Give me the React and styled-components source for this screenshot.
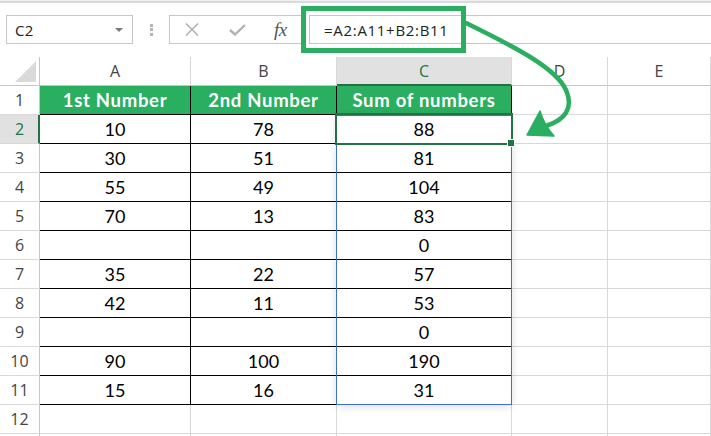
import React from 'react';
import styled, { createGlobalStyle, css } from 'styled-components';

const GREEN = '#2aae5f';
const DARK_GREEN = '#217346';
const GRID = '#d9d9d9';
const HEAD_LINE = '#c6c6c6';

const GlobalStyle = createGlobalStyle`
  html, body { margin: 0; padding: 0; background: #fff; }
  body { font-family: "Open Sans", "Noto Sans", sans-serif; }
  * { box-sizing: border-box; }
`;

const Window = styled.div`
  position: relative;
  width: 711px;
  height: 436px;
  overflow: hidden;
  background: #fff;
  display: flex;
  flex-direction: column;
`;

const RibbonEdge = styled.div`
  flex: none;
  height: 3px;
  border-top: 1px solid #f0f0f0;
  border-bottom: 2px solid #dadada;
`;

const FormulaBar = styled.div`
  flex: none;
  display: flex;
  align-items: center;
  height: 29px;
  margin-top: 12px;
  padding-left: 6px;
`;

const NameBox = styled.div`
  width: 127px;
  height: 29px;
  border: 1px solid ${HEAD_LINE};
  display: flex;
  align-items: center;
  justify-content: space-between;
  padding: 0 9px 0 8px;
  font-size: 15px;
  letter-spacing: 0.3px;
  color: #222;
`;

const Caret = styled.span`
  width: 0;
  height: 0;
  border-left: 4px solid transparent;
  border-right: 4px solid transparent;
  border-top: 4px solid #7a7a7a;
`;

const Grip = styled.div`
  margin-left: 17px;
  display: flex;
  flex-direction: column;
  gap: 1.5px;
`;

const GripDot = styled.span`
  width: 3px;
  height: 3px;
  background: #b4b4b4;
`;

const FxBox = styled.div`
  margin-left: 16px;
  width: 134px;
  height: 29px;
  border: 1px solid ${HEAD_LINE};
  border-right: none;
  display: flex;
  align-items: center;
  padding-left: 15px;
`;

const IconButton = styled.span`
  display: inline-flex;
  margin-left: ${p => p.$gap || 0}px;
`;

const FxLabel = styled.span`
  margin-left: 28px;
  font-family: "Liberation Serif", "DejaVu Serif", serif;
  font-style: italic;
  font-size: 19px;
  color: #555;
  letter-spacing: -0.5px;
  line-height: 1;
`;

const FormulaInput = styled.div`
  flex: 1;
  margin-left: 6px;
  height: 29px;
  border: 1px solid ${HEAD_LINE};
  border-right: none;
  display: flex;
  align-items: center;
  padding-left: 14px;
  font-size: 15px;
  letter-spacing: 0.7px;
  color: #222;
`;

const Callout = styled.div`
  position: absolute;
  left: 301px;
  top: 6px;
  width: 165px;
  height: 47px;
  border: 5px solid ${GREEN};
  pointer-events: none;
`;

const ArrowLayer = styled.svg`
  position: absolute;
  left: 0;
  top: 0;
  pointer-events: none;
`;

const Sheet = styled.div`
  flex: none;
  margin-top: 13px;
  display: grid;
  grid-template-columns: 40px 151px 146px 175px 96px 103px;
  grid-auto-rows: 29px;
`;

const placed = css`
  grid-column: ${p => p.$c};
  grid-row: ${p => p.$r};
`;

const Corner = styled.div`
  ${placed};
  position: relative;
  border-right: 1px solid ${HEAD_LINE};
  border-bottom: 1px solid ${HEAD_LINE};
  &::after {
    content: '';
    position: absolute;
    right: 3px;
    bottom: 3px;
    width: 0;
    height: 0;
    border-left: 21px solid transparent;
    border-bottom: 21px solid #dadada;
  }
`;

const ColHead = styled.div`
  ${placed};
  display: flex;
  align-items: center;
  justify-content: center;
  font-size: 16px;
  color: #444;
  border-right: 1px solid ${GRID};
  border-bottom: 1px solid ${HEAD_LINE};
  ${p => p.$selected && css`
    background: #e1e1e1;
    color: ${DARK_GREEN};
    border-bottom: 2px solid ${DARK_GREEN};
    padding-top: 1px;
  `}
`;

const RowHead = styled.div`
  ${placed};
  display: flex;
  align-items: center;
  justify-content: center;
  font-size: 16px;
  color: #444;
  border-right: 1px solid ${HEAD_LINE};
  border-bottom: 1px solid ${GRID};
  ${p => p.$selected && css`
    background: #e1e1e1;
    color: ${DARK_GREEN};
    border-right: 2px solid ${DARK_GREEN};
    padding-left: 1px;
  `}
`;

const Cell = styled.div`
  ${placed};
  display: flex;
  align-items: center;
  justify-content: center;
  font-family: Lato, "Open Sans", sans-serif;
  font-size: 18px;
  color: #000;
  border-right: 1px solid ${p => (p.$boxed ? '#000' : GRID)};
  border-bottom: 1px solid ${p => (p.$boxed ? '#000' : GRID)};
  ${p => p.$title && css`
    background: ${GREEN};
    color: #fff;
    font-weight: 700;
    font-size: 18.5px;
    letter-spacing: 0.7px;
  `}
`;

const SpillRange = styled.div`
  ${placed};
  margin-left: -1px;
  border: 1px solid #3a6fd6;
  box-shadow: 0 2px 9px rgba(0, 0, 0, 0.12);
  z-index: 1;
  pointer-events: none;
`;

const ActiveCell = styled.div`
  ${placed};
  position: relative;
  margin: -2px -1px -1px -2px;
  border: 2px solid ${DARK_GREEN};
  z-index: 2;
  pointer-events: none;
  &::after {
    content: '';
    position: absolute;
    right: -4px;
    bottom: -4px;
    width: 6px;
    height: 6px;
    background: ${DARK_GREEN};
    border: 1px solid #fff;
  }
`;

const COLS = ['A', 'B', 'C', 'D', 'E'];
const DATA = [
  ['1st Number', '2nd Number', 'Sum of numbers'],
  ['10', '78', '88'],
  ['30', '51', '81'],
  ['55', '49', '104'],
  ['70', '13', '83'],
  ['', '', '0'],
  ['35', '22', '57'],
  ['42', '11', '53'],
  ['', '', '0'],
  ['90', '100', '190'],
  ['15', '16', '31'],
];
const ROW_COUNT = 13;

const CrossIcon = () => (
  <svg width="14" height="13" viewBox="0 0 14 13">
    <path d="M1 0.5 L13 12.5 M13 0.5 L1 12.5" stroke="#b3b3b3" strokeWidth="1.6" fill="none" />
  </svg>
);

const CheckIcon = () => (
  <svg width="17" height="12" viewBox="0 0 17 12">
    <path d="M1 6 L6 10.5 L16 1" stroke="#b3b3b3" strokeWidth="2.4" fill="none" />
  </svg>
);

export default function App() {
  const rows = [];
  for (let r = 1; r <= ROW_COUNT; r++) {
    const gr = r + 1;
    rows.push(
      <RowHead key={`rh${r}`} $c={1} $r={gr} $selected={r === 2}>
        {r <= 12 ? r : ''}
      </RowHead>
    );
    for (let c = 0; c < 5; c++) {
      const value = DATA[r - 1] && c < 3 ? DATA[r - 1][c] : '';
      const boxed = r <= 11 && c < 3;
      rows.push(
        <Cell key={`c${r}-${c}`} $c={c + 2} $r={gr} $boxed={boxed} $title={r === 1 && c < 3}>
          {value}
        </Cell>
      );
    }
  }

  return (
    <Window>
      <GlobalStyle />
      <RibbonEdge />
      <FormulaBar>
        <NameBox>
          C2
          <Caret />
        </NameBox>
        <Grip>
          <GripDot />
          <GripDot />
          <GripDot />
        </Grip>
        <FxBox>
          <IconButton>
            <CrossIcon />
          </IconButton>
          <IconButton $gap={30}>
            <CheckIcon />
          </IconButton>
          <FxLabel>fx</FxLabel>
        </FxBox>
        <FormulaInput>=A2:A11+B2:B11</FormulaInput>
      </FormulaBar>

      <Sheet>
        <Corner $c={1} $r={1} />
        {COLS.map((l, i) => (
          <ColHead key={l} $c={i + 2} $r={1} $selected={l === 'C'}>
            {l}
          </ColHead>
        ))}
        {rows}
        <SpillRange $c={4} $r="3 / 13" />
        <ActiveCell $c={4} $r={3} />
      </Sheet>

      <Callout />
      <ArrowLayer width="711" height="436" viewBox="0 0 711 436">
        <path
          d="M466 23 C515 47 556 68 566 90 C574 108 565 120 546 126"
          stroke={GREEN}
          strokeWidth="4.5"
          fill="none"
          strokeLinecap="round"
        />
        <path d="M527 135 L540 111 Q544 125 554 136 Z" fill={GREEN} stroke={GREEN} strokeWidth="1.5" strokeLinejoin="round" />
      </ArrowLayer>
    </Window>
  );
}
